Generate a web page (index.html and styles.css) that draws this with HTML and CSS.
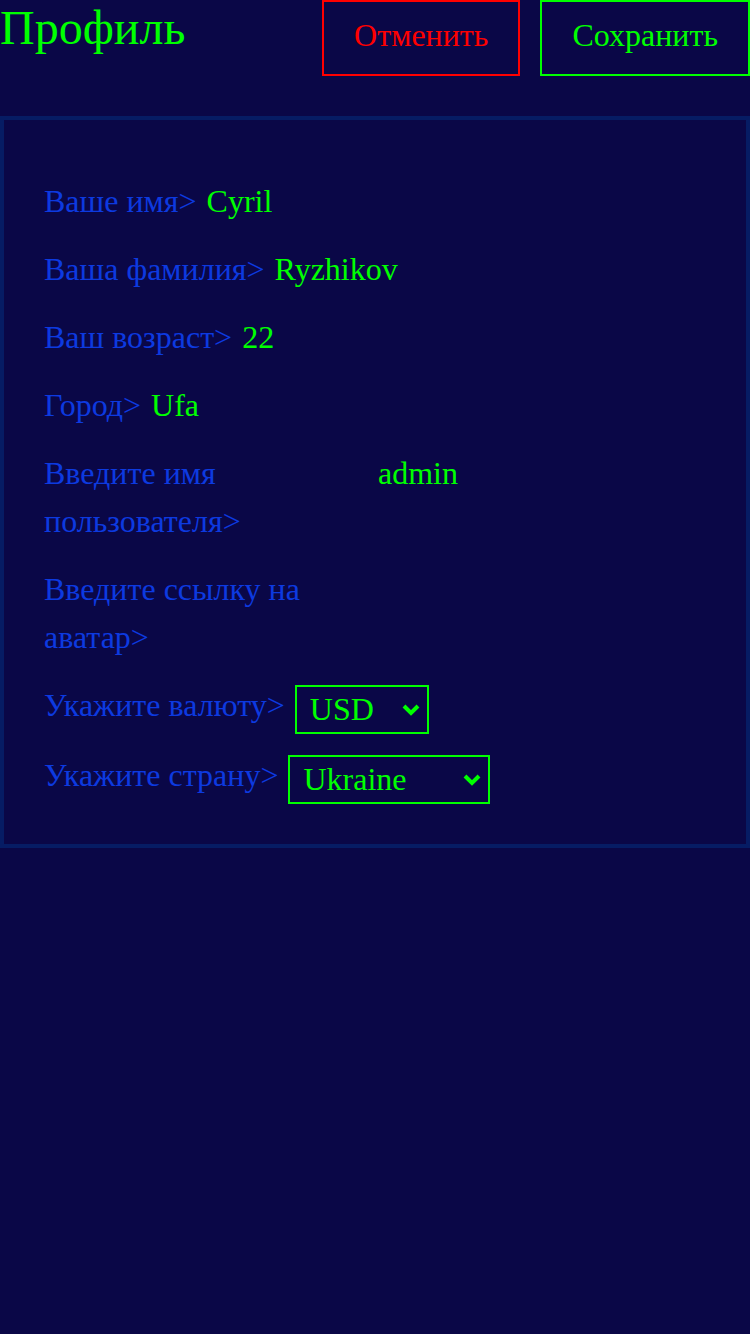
FILE: index.html
```html
<!DOCTYPE html>
<html lang="ru">
<head>
<meta charset="utf-8">
<title>Профиль</title>
<link rel="stylesheet" href="styles.css">
</head>
<body>
<header class="header">
  <h1 class="title">Профиль</h1>
  <div class="actions">
    <button class="btn btn-cancel">Отменить</button>
    <button class="btn btn-save">Сохранить</button>
  </div>
</header>
<main class="card">
  <div class="row"><span class="label">Ваше имя&gt;</span><span class="value">Cyril</span></div>
  <div class="row"><span class="label">Ваша фамилия&gt;</span><span class="value">Ryzhikov</span></div>
  <div class="row"><span class="label">Ваш возраст&gt;</span><span class="value">22</span></div>
  <div class="row"><span class="label">Город&gt;</span><span class="value">Ufa</span></div>
  <div class="row"><span class="label">Введите имя пользователя&gt;</span><span class="value">admin</span></div>
  <div class="row"><span class="label">Введите ссылку на аватар&gt;</span><span class="value"></span></div>
  <div class="row row-select"><span class="label">Укажите валюту&gt;</span>
    <div class="select select-currency"><span class="select-text">USD</span>
      <svg class="chev" width="18" height="12" viewBox="0 0 18 12"><polyline points="2,2 9,9 16,2" fill="none" stroke="#00ff00" stroke-width="4"/></svg>
    </div>
  </div>
  <div class="row row-select"><span class="label">Укажите страну&gt;</span>
    <div class="select select-country"><span class="select-text">Ukraine</span>
      <svg class="chev" width="18" height="12" viewBox="0 0 18 12"><polyline points="2,2 9,9 16,2" fill="none" stroke="#00ff00" stroke-width="4"/></svg>
    </div>
  </div>
</main>
</body>
</html>
```
FILE: styles.css
```css
html, body {
  margin: 0;
  padding: 0;
  background: #0a0747;
  min-height: 100%;
}
body {
  font-family: "Liberation Serif", "Times New Roman", serif;
  color: #0d3ae0;
}
.header {
  display: flex;
  justify-content: space-between;
  align-items: flex-start;
  margin-bottom: 40px;
}
.title {
  margin: 0;
  font-size: 48px;
  font-weight: normal;
  color: #00ff00;
  line-height: 1.15;
}
.actions {
  display: flex;
  gap: 20px;
  margin-right: 0;
}
.btn {
  box-sizing: border-box;
  height: 76px;
  padding: 0 30px 6px;
  background: transparent;
  font-family: "Liberation Serif", "Times New Roman", serif;
  font-size: 32px;
  border: 2px solid;
  margin: 0;
}
.btn-cancel {
  color: #ff0000;
  border-color: #ff0000;
}
.btn-save {
  color: #00ff00;
  border-color: #00ff00;
}
.card {
  border: 4px solid #061c64;
  padding: 57px 40px 43px;
  display: flex;
  flex-direction: column;
  gap: 20px;
}
.row {
  display: flex;
  align-items: baseline;
  gap: 10px;
  font-size: 32px;
  line-height: 48px;
}
.row-select {
  align-items: flex-start;
}
.label {
  max-width: 324px;
  color: #0d3ae0;
}
.value {
  color: #00ff00;
}
.select {
  display: flex;
  align-items: center;
  box-sizing: border-box;
  height: 49px;
  margin-top: 4px;
  margin-bottom: -3px;
  border: 2px solid #00ff00;
  padding: 0 7px 0 13px;
  color: #00ff00;
}
.select-text {
  line-height: 41px;
}
.select-currency { width: 134px; }
.select-country { width: 202px; }
.chev {
  margin-left: auto;
  flex: none;
}
```
